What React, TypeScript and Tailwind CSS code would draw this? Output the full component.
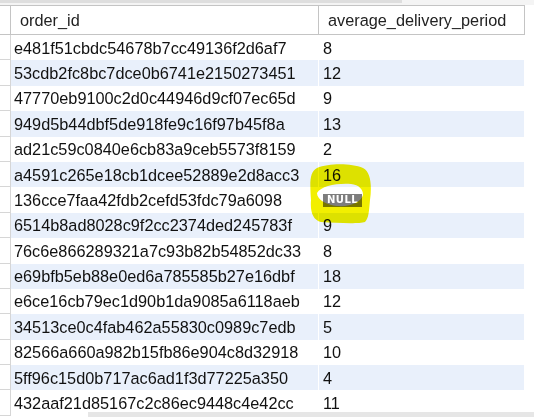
import React from "react";

const rows: { id: string; period: number | null }[] = [
  { id: "e481f51cbdc54678b7cc49136f2d6af7", period: 8 },
  { id: "53cdb2fc8bc7dce0b6741e2150273451", period: 12 },
  { id: "47770eb9100c2d0c44946d9cf07ec65d", period: 9 },
  { id: "949d5b44dbf5de918fe9c16f97b45f8a", period: 13 },
  { id: "ad21c59c0840e6cb83a9ceb5573f8159", period: 2 },
  { id: "a4591c265e18cb1dcee52889e2d8acc3", period: 16 },
  { id: "136cce7faa42fdb2cefd53fdc79a6098", period: null },
  { id: "6514b8ad8028c9f2cc2374ded245783f", period: 9 },
  { id: "76c6e866289321a7c93b82b54852dc33", period: 8 },
  { id: "e69bfb5eb88e0ed6a785585b27e16dbf", period: 18 },
  { id: "e6ce16cb79ec1d90b1da9085a6118aeb", period: 12 },
  { id: "34513ce0c4fab462a55830c0989c7edb", period: 5 },
  { id: "82566a660a982b15fb86e904c8d32918", period: 10 },
  { id: "5ff96c15d0b717ac6ad1f3d77225a350", period: 4 },
  { id: "432aaf21d85167c2c86ec9448c4e42cc", period: 11 },
];

const NullBadge = () => (
  <span className="inline-flex items-center justify-center h-[13px] px-[4px] bg-[#7d7d7d] text-white text-[10px] font-bold leading-none tracking-[0.5px] font-['DejaVu_Sans',sans-serif]">
    NULL
  </span>
);

export default function App() {
  return (
    <div className="relative w-[534px] h-[417px] overflow-hidden bg-white flex flex-col font-['Liberation_Sans',Arial,sans-serif] text-[16.3px] leading-none text-[#111]">
      {/* top edge */}
      <div className="h-[5px] shrink-0 bg-[#f4f4f4] flex">
        <div className="w-[402px] h-[3px] bg-[#dedede]" />
      </div>

      {/* header */}
      <div className="h-[30px] shrink-0 flex">
        <div className="w-[11px] border-t border-b border-r border-[#c4c4c4]" />
        <div className="w-[308px] border-t border-b border-r border-[#c4c4c4] flex items-center pl-[9px] text-[#222]">
          order_id
        </div>
        <div className="w-[206px] border-t border-b border-r border-[#c4c4c4] flex items-center pl-[9px] text-[#222]">
          average_delivery_period
        </div>
      </div>

      {/* rows */}
      <div className="flex-1">
        {rows.map((r, i) => (
          <div key={r.id} className="flex h-[25.4px]">
            <div className="w-[11px] shrink-0 border-r border-b border-[#d6d6d6]" />
            <div className={`w-[307px] shrink-0 flex items-center pl-[3px] mr-px ${i % 2 === 1 ? "bg-[#e9f0fb]" : ""}`}>
              {r.id}
            </div>
            <div className={`w-[205px] shrink-0 flex items-center pl-[4px] ${i % 2 === 1 ? "bg-[#e9f0fb]" : ""}`}>
              {r.period === null ? <NullBadge /> : r.period}
            </div>
          </div>
        ))}
      </div>

      {/* horizontal scrollbar */}
      <div className="absolute left-[88px] right-0 bottom-0 h-[5px] bg-[#e6e6e6]" />

      {/* yellow marker highlight */}
      <svg
        className="absolute left-[307px] top-[162px] mix-blend-multiply pointer-events-none"
        width="66"
        height="64"
        viewBox="0 0 66 64"
      >
        <path
          d="M10 6 C22 1 44 1 56 6 C64 10 65 24 63 38 C62 48 62 56 58 60 C52 62 30 61 14 60 C6 58 3 50 4 38 C3 22 2 10 10 6 Z M10 31 C14 24 30 21 44 22 C52 23 56 27 56 33 C54 40 44 45 30 44 C20 43 10 38 10 31 Z"
          fill="#f2ef00"
          fillRule="evenodd"
        />
      </svg>
    </div>
  );
}
